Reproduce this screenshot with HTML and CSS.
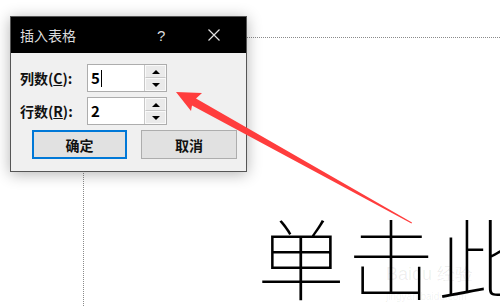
FILE: index.html
```html
<!DOCTYPE html>
<html lang="zh">
<head>
    <meta charset="UTF-8">
    <title>插入表格</title>
    <link rel="stylesheet" href="styles.css">
</head>
<body>
    <div class="slide">
        <div class="placeholder">
            <div class="title-text">单击此</div>
            <div class="watermark">Baidu 经验<br><span>jingyan.baidu.com</span></div>
        </div>
    </div>

    <div class="dialog">
        <div class="titlebar">
            <span class="caption">插入表格</span>
            <span class="help">?</span>
            <svg class="close" width="12" height="12" viewBox="0 0 12 12">
                <path d="M0.5 0.5 L11.5 11.5 M11.5 0.5 L0.5 11.5" stroke="#e0e0e0" stroke-width="1.2" fill="none"/>
            </svg>
        </div>
        <div class="body">
            <div class="field">
                <label>列数(<u>C</u>):</label>
                <div class="spin">
                    <div class="value">5<span class="caret"></span></div>
                    <div class="arrows">
                        <div class="btn up"></div>
                        <div class="btn down"></div>
                    </div>
                </div>
            </div>
            <div class="field">
                <label>行数(<u>R</u>):</label>
                <div class="spin">
                    <div class="value">2</div>
                    <div class="arrows">
                        <div class="btn up"></div>
                        <div class="btn down"></div>
                    </div>
                </div>
            </div>
            <div class="actions">
                <button class="ok">确定</button>
                <button>取消</button>
            </div>
        </div>
    </div>

    <!-- annotation arrow drawn over the dialog -->
    <svg class="arrow" width="500" height="306" viewBox="0 0 500 306">
        <polygon points="176,92 202,93 196,98.5 412,222.5 411.5,223.5 192,105.5 191,111" fill="#ff3d3d"/>
    </svg>
</body>
</html>
```

FILE: styles.css
```css
body {
    margin: 0;
    width: 500px;
    height: 306px;
    overflow: hidden;
    position: relative;
    background-color: #ffffff;
    font-family: "Noto Sans CJK SC", "Noto Sans", sans-serif;
}
.slide {
    width: 500px;
    height: 306px;
    position: relative;
    overflow: hidden;
}
.placeholder {
    position: absolute;
    left: 83px;
    top: 37px;
    width: 480px;
    height: 300px;
    border-top: 1px dotted #8a8a8a;
    border-left: 1px dotted #8a8a8a;
}
.title-text {
    margin-top: 173px;
    margin-left: 173px;
    font-size: 88px;
    line-height: 88px;
    font-weight: 100;
    letter-spacing: 2px;
    color: #000;
    white-space: nowrap;
}
.watermark {
    position: absolute;
    left: 302px;
    top: 226px;
    font-family: "Liberation Sans", sans-serif;
    font-size: 18px;
    line-height: 20px;
    color: rgba(0, 0, 0, 0.07);
}
.watermark span {
    font-size: 10px;
}
.arrow {
    position: absolute;
    left: 0;
    top: 0;
}
.dialog {
    position: absolute;
    left: 10px;
    top: 16px;
    width: 235px;
    height: 154px;
    border: 1px solid #555;
    background-color: #f0f0f0;
    box-shadow: 0 2px 14px rgba(0, 0, 0, 0.3);
}
.titlebar {
    height: 36px;
    background-color: #000;
    display: flex;
    align-items: center;
    color: #dcdcdc;
    font-size: 14px;
}
.caption {
    margin-left: 9px;
    width: 137px;
}
.help {
    font-family: "Liberation Sans", sans-serif;
    font-size: 15px;
    width: 51px;
}
.body {
    padding: 11px 0 0 9px;
}
.field {
    display: flex;
    align-items: center;
    height: 28px;
    margin-bottom: 5px;
}
label {
    width: 67px;
    font-size: 14px;
    font-weight: bold;
    color: #111;
}
.spin {
    display: flex;
    width: 78px;
    height: 26px;
    border: 1px solid #adadad;
    background-color: #fff;
}
.value {
    flex: 1;
    font-size: 15px;
    font-weight: bold;
    line-height: 26px;
    padding-left: 3px;
    color: #000;
    display: flex;
    align-items: center;
}
.caret {
    display: inline-block;
    width: 1px;
    height: 17px;
    margin-left: 1px;
    background-color: #000;
}
.arrows {
    width: 21px;
    display: flex;
    flex-direction: column;
    border-left: 1px solid #c8c8c8;
}
.btn {
    flex: 1;
    background-color: #eaeaea;
    border: 1px solid #fafafa;
    display: flex;
    align-items: center;
    justify-content: center;
}
.btn.up {
    border-bottom-color: #c8c8c8;
}
.btn.up::after {
    content: "";
    border-left: 4px solid transparent;
    border-right: 4px solid transparent;
    border-bottom: 4px solid #000;
}
.btn.down::after {
    content: "";
    border-left: 4px solid transparent;
    border-right: 4px solid transparent;
    border-top: 4px solid #000;
}
.actions {
    display: flex;
    gap: 14px;
    padding-left: 12px;
    margin-top: 2px;
}
button {
    width: 96px;
    height: 29px;
    background-color: #e1e1e1;
    border: 1px solid #adadad;
    font-family: "Noto Sans CJK SC", sans-serif;
    font-size: 14px;
    font-weight: bold;
    color: #111;
    padding: 0;
}
button.ok {
    width: 95px;
    border: 2px solid #0078d7;
}
```
